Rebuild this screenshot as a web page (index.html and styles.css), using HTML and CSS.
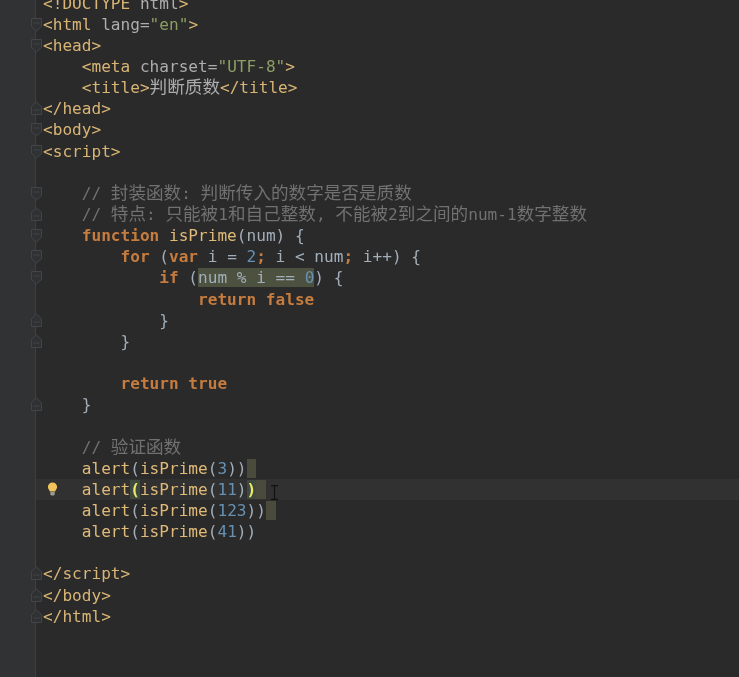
FILE: index.html
```html
<!DOCTYPE html>
<html lang="en">
<head>
<meta charset="UTF-8">
<title>判断质数</title>
<link rel="stylesheet" href="styles.css">
</head>
<body>
<svg class="defs" width="0" height="0" aria-hidden="true">
  <symbol id="fold-open" viewBox="0 0 13 17"><path d="M1.5 2.5h10v8l-5 4.5-5-4.5z"/><path d="M3.5 7h6"/></symbol>
  <symbol id="fold-end" viewBox="0 0 13 17"><path d="M1.5 14.5v-8l5-4.5 5 4.5v8z"/><path d="M3.5 10h6"/></symbol>
</svg>
<main class="editor">
  <div class="line"><span class="fold"></span><code><span class="tag">&lt;!DOCTYPE</span> <span class="attr">html</span><span class="tag">&gt;</span></code></div>
  <div class="line"><span class="fold"><svg><use href="#fold-open"/></svg></span><code><span class="tag">&lt;html</span> <span class="attr">lang=</span><span class="str">"en"</span><span class="tag">&gt;</span></code></div>
  <div class="line"><span class="fold"><svg><use href="#fold-open"/></svg></span><code><span class="tag">&lt;head&gt;</span></code></div>
  <div class="line"><span class="fold"></span><code>    <span class="tag">&lt;meta</span> <span class="attr">charset=</span><span class="str">"UTF-8"</span><span class="tag">&gt;</span></code></div>
  <div class="line"><span class="fold"></span><code>    <span class="tag">&lt;title&gt;</span><span class="cjk attr">判断质数</span><span class="tag">&lt;/title&gt;</span></code></div>
  <div class="line"><span class="fold"><svg><use href="#fold-end"/></svg></span><code><span class="tag">&lt;/head&gt;</span></code></div>
  <div class="line"><span class="fold"><svg><use href="#fold-open"/></svg></span><code><span class="tag">&lt;body&gt;</span></code></div>
  <div class="line"><span class="fold"><svg><use href="#fold-open"/></svg></span><code><span class="tag">&lt;script&gt;</span></code></div>
  <div class="line"><span class="fold"></span><code> </code></div>
  <div class="line"><span class="fold"><svg><use href="#fold-open"/></svg></span><code class="com">    // <span class="cjk">封装函数</span>: <span class="cjk">判断传入的数字是否是质数</span></code></div>
  <div class="line"><span class="fold"><svg><use href="#fold-end"/></svg></span><code class="com">    // <span class="cjk">特点</span>: <span class="cjk">只能被</span>1<span class="cjk">和自己整数</span>, <span class="cjk">不能被</span>2<span class="cjk">到之间的</span>num-1<span class="cjk">数字整数</span></code></div>
  <div class="line"><span class="fold"><svg><use href="#fold-open"/></svg></span><code>    <span class="kw">function</span> <span class="fn">isPrime</span>(num) {</code></div>
  <div class="line"><span class="fold"><svg><use href="#fold-open"/></svg></span><code>        <span class="kw">for</span> (<span class="kw">var</span> i = <span class="num">2</span><span class="kw">;</span> i &lt; num<span class="kw">;</span> i++) {</code></div>
  <div class="line"><span class="fold"><svg><use href="#fold-open"/></svg></span><code>            <span class="kw">if</span> (<span class="occ">num % i == <span class="num">0</span></span>) {</code></div>
  <div class="line"><span class="fold"></span><code>                <span class="kw">return false</span></code></div>
  <div class="line"><span class="fold"><svg><use href="#fold-end"/></svg></span><code>            }</code></div>
  <div class="line"><span class="fold"><svg><use href="#fold-end"/></svg></span><code>        }</code></div>
  <div class="line"><span class="fold"></span><code> </code></div>
  <div class="line"><span class="fold"></span><code>        <span class="kw">return true</span></code></div>
  <div class="line"><span class="fold"><svg><use href="#fold-end"/></svg></span><code>    }</code></div>
  <div class="line"><span class="fold"></span><code> </code></div>
  <div class="line"><span class="fold"></span><code class="com">    // <span class="cjk">验证函数</span></code></div>
  <div class="line"><span class="fold"></span><code>    <span class="fn">alert</span>(<span class="fn">isPrime</span>(<span class="num">3</span>))<span class="cell"> </span></code></div>
  <div class="line current"><span class="fold"></span><svg class="bulb" viewBox="0 0 10 14"><path class="bulb-glass" d="M5 0.5a4.6 4.6 0 0 0-4.6 4.6c0 1.9 1.4 2.9 1.9 4.4h5.4c.5-1.5 1.9-2.5 1.9-4.4A4.6 4.6 0 0 0 5 .5z"/><path class="bulb-base" d="M2.8 10h4.4v2.2l-1 1.3H3.8l-1-1.3z"/></svg><code>    <span class="fn">alert</span><span class="brace">(</span><span class="fn">isPrime</span>(<span class="num">11</span>)<span class="brace">)</span><span class="cell"> </span></code><svg class="ibeam" viewBox="0 0 9 15"><path d="M1 .7h7M4.5.7v13.6M1 14.3h7"/></svg></div>
  <div class="line"><span class="fold"></span><code>    <span class="fn">alert</span>(<span class="fn">isPrime</span>(<span class="num">123</span>))<span class="cell"> </span></code></div>
  <div class="line"><span class="fold"></span><code>    <span class="fn">alert</span>(<span class="fn">isPrime</span>(<span class="num">41</span>))</code></div>
  <div class="line"><span class="fold"></span><code> </code></div>
  <div class="line"><span class="fold"><svg><use href="#fold-end"/></svg></span><code><span class="tag">&lt;/script&gt;</span></code></div>
  <div class="line"><span class="fold"><svg><use href="#fold-end"/></svg></span><code><span class="tag">&lt;/body&gt;</span></code></div>
  <div class="line"><span class="fold"><svg><use href="#fold-end"/></svg></span><code><span class="tag">&lt;/html&gt;</span></code></div>
</main>
</body>
</html>
```

FILE: styles.css
```css
html, body {
  margin: 0;
  height: 100%;
  overflow: hidden;
  background: #2a2a2b;
}

.defs {
  position: absolute;
}

.editor {
  height: 677px;
  overflow: hidden;
  background:
    linear-gradient(#3d3f41, #3d3f41) 35px 0 / 1px 100% no-repeat,
    linear-gradient(#313234, #313234) 0 0 / 35px 100% no-repeat,
    #2a2a2b;
  filter: blur(0.5px);
}

.line {
  position: relative;
  display: flex;
  height: 21.15px;
  padding-left: 30px;
  font: 16.1px/21.15px "DejaVu Sans Mono", "Noto Sans CJK SC", monospace;
  color: #a2aeb9;
  white-space: pre;
}

.line:first-child {
  margin-top: -7.4px;
}

.current {
  background: linear-gradient(#313131, #313131) 36px 0 / 100% 100% no-repeat;
}

.fold {
  flex: none;
  width: 13px;
  height: 21.15px;
}

.fold svg {
  display: block;
  width: 13px;
  height: 17px;
  margin-top: 2px;
  fill: #303133;
  stroke: #424447;
  stroke-width: 1;
}

code {
  font: inherit;
}

.tag { color: #d9b574; }
.attr { color: #adadad; }
.str { color: #8c9e63; }
.com { color: #717171; }
.kw { color: #c57c3e; font-weight: 700; }
.fn { color: #e0ba78; }
.num { color: #6691b3; }

.cjk {
  font-family: "Noto Sans CJK SC", sans-serif;
  font-size: 17.6px;
  font-weight: 400;
  line-height: 0;
}

.occ { background: #4c523f; }
.cell { background: #4a4b3c; }
.brace { color: #f0e868; background: #3e4a40; font-weight: 700; }

.bulb {
  position: absolute;
  left: 47px;
  top: 3px;
  width: 11px;
  height: 14px;
}

.bulb-glass { fill: #f0c35c; }
.bulb-base { fill: #9a9a96; }

.ibeam {
  position: absolute;
  left: 270px;
  top: 6px;
  width: 9px;
  height: 15px;
  fill: none;
  stroke: #111;
  stroke-width: 1.2;
}
```
